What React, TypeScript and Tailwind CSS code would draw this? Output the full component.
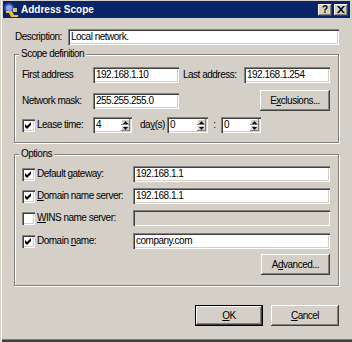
import React from 'react';

const sunken =
  "shadow-[inset_1px_1px_0_#808080,inset_2px_2px_0_#404040,inset_-1px_-1px_0_#ffffff,inset_-2px_-2px_0_#d4d0c8]";
const raised =
  "bg-[#d4d0c8] shadow-[inset_-1px_-1px_0_#404040,inset_1px_1px_0_#ffffff,inset_-2px_-2px_0_#808080,inset_2px_2px_0_#d4d0c8]";
const etched = "border border-[#808080] shadow-[1px_1px_0_#ffffff,inset_1px_1px_0_#ffffff]";

function Field({ value, w, disabled }: { value?: string; w: string; disabled?: boolean }) {
  return (
    <div className={`${w} h-[16px] ${sunken} ${disabled ? 'bg-[#d4d0c8]' : 'bg-white'} flex items-center pl-[3px] leading-none`}>
      {value}
    </div>
  );
}

function Arrow({ up }: { up?: boolean }) {
  return (
    <div className="flex-1 bg-[#d4d0c8] shadow-[inset_-1px_-1px_0_#808080,inset_1px_1px_0_#ffffff] flex items-center justify-center">
      <svg width="5" height="3" viewBox="0 0 5 3">
        <path d={up ? 'M2.5 0 L5 3 L0 3 Z' : 'M0 0 L5 0 L2.5 3 Z'} fill="#000" />
      </svg>
    </div>
  );
}

function Spinner({ value, w }: { value: string; w: string }) {
  return (
    <div className={`${w} h-[16px] ${sunken} bg-white flex items-stretch p-[2px]`}>
      <div className="flex-1 flex items-center pl-[1px] leading-none">{value}</div>
      <div className="w-[9px] flex flex-col">
        <Arrow up />
        <Arrow />
      </div>
    </div>
  );
}

function Check({ checked }: { checked?: boolean }) {
  return (
    <div className={`w-[13px] h-[13px] shrink-0 bg-white ${sunken} flex items-center justify-center`}>
      {checked && (
        <svg width="7" height="7" viewBox="0 0 7 7">
          <path d="M0 2 L2 4 L6 0 L6 3 L2 7 L0 5 Z" fill="#000" />
        </svg>
      )}
    </div>
  );
}

function Btn({ children, w, def }: { children: React.ReactNode; w: string; def?: boolean }) {
  return (
    <div className={`${w} h-[21px] ${def ? 'border border-black' : ''} flex`}>
      <div className={`flex-1 ${raised} flex items-center justify-center leading-none`}>{children}</div>
    </div>
  );
}

function Group({ title, children, mt }: { title: string; children: React.ReactNode; mt: string }) {
  return (
    <fieldset className={`${mt} ml-[11px] w-[325px] ${etched} p-0`}>
      <legend className="ml-[4px] px-[2px] h-[12px] leading-[12px] bg-[#d4d0c8]">{title}</legend>
      <div className="pl-[7px] pr-[8px]">{children}</div>
    </fieldset>
  );
}

function OptionRow({ label, value, checked, disabled, mt }: { label: React.ReactNode; value?: string; checked?: boolean; disabled?: boolean; mt: string }) {
  return (
    <div className={`${mt} h-[16px] flex items-center`}>
      <Check checked={checked} />
      <div className="w-[96px] ml-[2px] leading-none">{label}</div>
      <Field value={value} w="w-[197px]" disabled={disabled} />
    </div>
  );
}

export default function App() {
  return (
    <div className="w-[352px] h-[342px] bg-[#d4d0c8] pt-[1px] pl-[3px] pr-[2px] overflow-hidden text-[10px] tracking-[-0.5px] text-black font-['Liberation_Sans',Arial,sans-serif] shadow-[inset_1px_0_0_#d4d0c8,inset_2px_0_0_#ffffff,inset_0_-1px_0_#404040,inset_0_-2px_0_#404040,inset_0_-3px_0_#808080]">
      {/* title bar */}
      <div className="h-[17px] bg-[#0a246a] flex items-center pr-[2px]">
        <svg width="16" height="16" viewBox="0 0 16 16">
          <circle cx="6" cy="6" r="5" fill="#3a4fb8" />
          <circle cx="6" cy="6" r="3" fill="#8fa2e8" />
          <path d="M3 9 L9 9 L11 13 L15 13 L15 15 L8 15 L6 11 L3 11 Z" fill="#e8c020" />
          <rect x="10" y="6" width="4" height="4" fill="#d8c060" />
        </svg>
        <span className="ml-[2px] text-white font-bold tracking-normal leading-none">Address Scope</span>
        <div className="ml-auto flex gap-[2px]">
          <div className={`w-[14px] h-[12px] ${raised} flex items-center justify-center font-bold text-[10px] leading-none tracking-normal`}>?</div>
          <div className={`w-[14px] h-[12px] ${raised} flex items-center justify-center`}>
            <svg width="8" height="7" viewBox="0 0 8 7">
              <path d="M0 0 L2 0 L4 2.2 L6 0 L8 0 L5 3.5 L8 7 L6 7 L4 4.8 L2 7 L0 7 L3 3.5 Z" fill="#000" />
            </svg>
          </div>
        </div>
      </div>

      {/* description */}
      <div className="mt-[11px] ml-[12px] h-[16px] flex items-center">
        <div className="w-[53px] leading-none">Description:</div>
        <Field value="Local network." w="w-[271px]" />
      </div>

      <Group title="Scope definition" mt="mt-[3px]">
        <div className="mt-[7px] h-[16px] flex items-center">
          <div className="w-[71px] leading-none">First address</div>
          <Field value="192.168.1.10" w="w-[86px]" />
          <div className="ml-[4px] w-[61px] leading-none">Last address:</div>
          <Field value="192.168.1.254" w="w-[86px]" />
        </div>
        <div className="mt-[7px] h-[21px] flex items-center">
          <div className="w-[71px] leading-none">Network mask:</div>
          <Field value="255.255.255.0" w="w-[86px]" />
          <div className="ml-auto">
            <Btn w="w-[70px]">
              E<span className="underline">x</span>clusions...
            </Btn>
          </div>
        </div>
        <div className="mt-[6px] mb-[9px] h-[16px] flex items-center">
          <Check checked />
          <div className="w-[56px] ml-[2px] leading-none">Lease time:</div>
          <Spinner value="4" w="w-[39px]" />
          <div className="ml-[8px] w-[27px] leading-none">
            da<span className="underline">y</span>(s)
          </div>
          <Spinner value="0" w="w-[41px]" />
          <div className="w-[13px] text-center leading-none">:</div>
          <Spinner value="0" w="w-[40px]" />
        </div>
      </Group>

      <Group title="Options" mt="mt-[5px]">
        <OptionRow
          mt="mt-[6px]"
          checked
          value="192.168.1.1"
          label={<>Default <span className="underline">g</span>ateway:</>}
        />
        <OptionRow
          mt="mt-[6px]"
          checked
          value="192.168.1.1"
          label={<><span className="underline">D</span>omain name server:</>}
        />
        <OptionRow
          mt="mt-[6px]"
          disabled
          label={<><span className="underline">W</span>INS name server:</>}
        />
        <OptionRow
          mt="mt-[7px]"
          checked
          value="company.com"
          label={<>Domain <span className="underline">n</span>ame:</>}
        />
        <div className="mt-[5px] mb-[10px] flex justify-end">
          <Btn w="w-[69px]">
            A<span className="underline">d</span>vanced...
          </Btn>
        </div>
      </Group>

      <div className="mt-[19px] flex justify-end gap-[8px] pr-[11px]">
        <Btn w="w-[68px]" def>
          <span className="underline">O</span>K
        </Btn>
        <Btn w="w-[68px]">
          <span className="underline">C</span>ancel
        </Btn>
      </div>
    </div>
  );
}
